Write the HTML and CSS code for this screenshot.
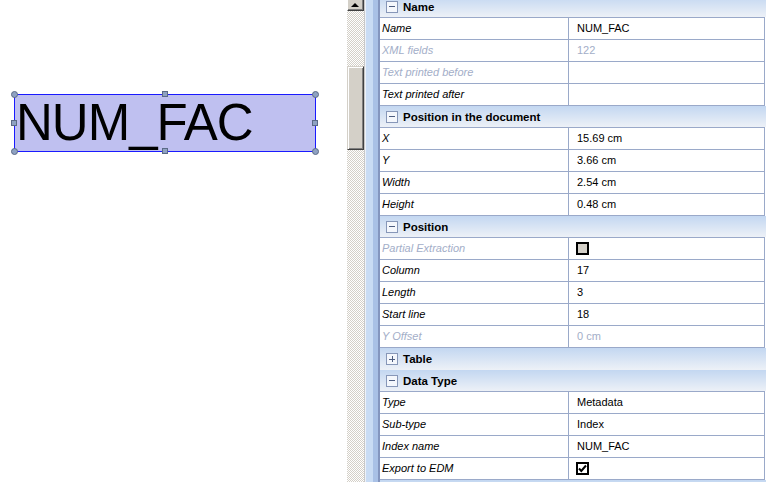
FILE: index.html
```html
<!DOCTYPE html>
<html>
<head>
<meta charset="utf-8">
<link rel="stylesheet" href="styles.css">
</head>
<body>
<div class="app">
  <div class="canvas">
    <div class="field">NUM_FAC
      <span class="hd c tl"></span><span class="hd s tm"></span><span class="hd c tr"></span>
      <span class="hd s ml"></span><span class="hd s mr"></span>
      <span class="hd c bl"></span><span class="hd s bm"></span><span class="hd c br"></span>
    </div>
  </div>
  <div class="vscroll">
    <div class="sbtn"><span class="arrow"></span></div>
    <div class="track t1"></div>
    <div class="thumb"></div>
    <div class="track t2"></div>
  </div>
  <div class="gutter"></div>
  <div class="grid">
    <div class="section">
      <div class="head"><span class="tog minus"></span><span class="title">Name</span></div>
      <div class="row"><div class="lab">Name</div><div class="val">NUM_FAC</div></div>
      <div class="row dis"><div class="lab">XML fields</div><div class="val">122</div></div>
      <div class="row dis"><div class="lab">Text printed before</div><div class="val"></div></div>
      <div class="row"><div class="lab">Text printed after</div><div class="val"></div></div>
    </div>
    <div class="section">
      <div class="head"><span class="tog minus"></span><span class="title">Position in the document</span></div>
      <div class="row"><div class="lab">X</div><div class="val">15.69 cm</div></div>
      <div class="row"><div class="lab">Y</div><div class="val">3.66 cm</div></div>
      <div class="row"><div class="lab">Width</div><div class="val">2.54 cm</div></div>
      <div class="row"><div class="lab">Height</div><div class="val">0.48 cm</div></div>
    </div>
    <div class="section">
      <div class="head"><span class="tog minus"></span><span class="title">Position</span></div>
      <div class="row dis"><div class="lab">Partial Extraction</div><div class="val"><span class="chk grey"></span></div></div>
      <div class="row"><div class="lab">Column</div><div class="val">17</div></div>
      <div class="row"><div class="lab">Length</div><div class="val">3</div></div>
      <div class="row"><div class="lab">Start line</div><div class="val">18</div></div>
      <div class="row dis"><div class="lab">Y Offset</div><div class="val">0 cm</div></div>
    </div>
    <div class="section collapsed">
      <div class="head"><span class="tog plus"></span><span class="title">Table</span></div>
    </div>
    <div class="section">
      <div class="head"><span class="tog minus"></span><span class="title">Data Type</span></div>
      <div class="row"><div class="lab">Type</div><div class="val">Metadata</div></div>
      <div class="row"><div class="lab">Sub-type</div><div class="val">Index</div></div>
      <div class="row"><div class="lab">Index name</div><div class="val">NUM_FAC</div></div>
      <div class="row"><div class="lab">Export to EDM</div><div class="val"><span class="chk on"><svg width="13" height="13" viewBox="0 0 13 13"><path d="M3 6.5 L5.3 9 L10 3.5" fill="none" stroke="#000" stroke-width="2"/></svg></span></div></div>
    </div>
    <div class="section">
      <div class="head"></div>
    </div>
  </div>
</div>
</body>
</html>
```
FILE: styles.css
```css
html, body {
  margin: 0;
  padding: 0;
  background: #fff;
  overflow: hidden;
}
.app {
  display: flex;
  width: 766px;
  height: 482px;
  font-family: "Liberation Sans", Arial, sans-serif;
  overflow: hidden;
}
.canvas {
  position: relative;
  width: 347px;
  flex: none;
  background: #fff;
}
.field {
  position: absolute;
  left: 14px;
  top: 94px;
  width: 302px;
  height: 58px;
  box-sizing: border-box;
  border: 1px solid #1a1aff;
  background: #bfc0f0;
  font-size: 51px;
  letter-spacing: -1px;
  line-height: 56px;
  padding-left: 1px;
  color: #000;
  white-space: nowrap;
}
.hd {
  position: absolute;
  box-sizing: border-box;
  background: #8fa2c2;
  border: 1px solid #5b6a86;
}
.hd.c { width: 7px; height: 7px; border-radius: 50%; }
.hd.s { width: 6px; height: 6px; }
.tl { left: -4px; top: -4px; }
.tr { left: 297px; top: -4px; }
.bl { left: -4px; top: 53px; }
.br { left: 297px; top: 53px; }
.tm { left: 147px; top: -4px; }
.bm { left: 147px; top: 53px; }
.ml { left: -4px; top: 25px; }
.mr { left: 297px; top: 25px; }

.vscroll {
  width: 17px;
  flex: none;
  display: flex;
  flex-direction: column;
}
.track {
  background: repeating-conic-gradient(#d4d0c8 0 25%, #ffffff 0 50%) 0 0 / 2px 2px;
}
.t1 { height: 55px; }
.t2 { flex: 1; }
.sbtn {
  height: 11px;
  box-sizing: border-box;
  background: #d4d0c8;
  border-right: 1px solid #404040;
  border-bottom: 1px solid #404040;
  border-left: 1px solid #fff;
  box-shadow: inset -1px -1px 0 #808080;
  display: flex;
  justify-content: center;
  align-items: flex-start;
  padding-top: 3px;
}
.arrow {
  width: 0;
  height: 0;
  border-left: 4px solid transparent;
  border-right: 4px solid transparent;
  border-bottom: 4px solid #000;
  margin-left: -1px;
}
.thumb {
  height: 84px;
  box-sizing: border-box;
  background: #d4d0c8;
  border-top: 1px solid #d4d0c8;
  border-left: 1px solid #d4d0c8;
  border-right: 1px solid #404040;
  border-bottom: 1px solid #404040;
  box-shadow: inset 1px 1px 0 #fff, inset -1px -1px 0 #808080;
}
.gutter {
  width: 16px;
  flex: none;
  background: linear-gradient(to right, #c8c8c8 0 1px, #eef2f8 1px 2px, #c9dcf4 2px 9px, #a9c1e6 9px 14px, #8496bf 14px 16px);
}
.grid {
  width: 386px;
  flex: none;
  margin-top: -4px;
  font-size: 11px;
}
.head {
  height: 21px;
  display: flex;
  align-items: center;
  padding-left: 6px;
  background: linear-gradient(#c3d7f1, #edf1f7);
}
.collapsed .head {
  height: 22px;
}
.tog {
  position: relative;
  width: 12px;
  height: 12px;
  box-sizing: border-box;
  border: 1px solid #8797b8;
  background: #f4f7fc;
  flex: none;
}
.tog::before {
  content: "";
  position: absolute;
  left: 2px;
  top: 4.5px;
  width: 6px;
  height: 1px;
  background: #4d5d80;
}
.tog.plus::after {
  content: "";
  position: absolute;
  left: 4.5px;
  top: 2px;
  width: 1px;
  height: 6px;
  background: #4d5d80;
}
.title {
  margin-left: 5px;
  font-weight: bold;
  font-size: 11.5px;
  color: #000;
}
.row {
  display: grid;
  grid-template-columns: 189px 196px;
  width: 385px;
  height: 22px;
  box-sizing: border-box;
  border-top: 1px solid #9aa9c9;
  background: #fff;
}
.section .row:last-child {
  height: 23px;
  border-bottom: 1px solid #9aa9c9;
}
.lab, .val {
  display: flex;
  align-items: center;
  height: 21px;
  box-sizing: border-box;
  padding-bottom: 1px;
  border-right: 1px solid #9aa9c9;
  white-space: nowrap;
}
.lab {
  padding-left: 2px;
  font-style: italic;
  color: #000;
}
.val {
  padding-left: 8px;
  color: #000;
}
.dis .lab, .dis .val {
  color: #a3aec8;
}
.chk {
  width: 13px;
  height: 13px;
  box-sizing: border-box;
  border: 2px solid #000;
  margin-left: -1px;
  display: block;
  position: relative;
}
.chk.grey {
  background: #d4d0c8;
}
.chk.on {
  background: #fff;
}
.chk svg {
  position: absolute;
  left: -2px;
  top: -2px;
}
```
